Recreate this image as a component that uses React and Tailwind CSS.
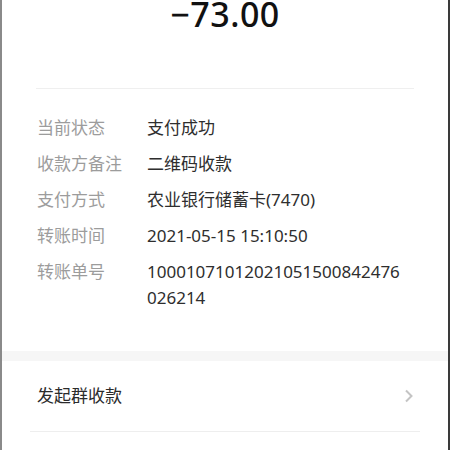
export default function App() {
  const rows = [
    ["当前状态", ["支付成功"]],
    ["收款方备注", ["二维码收款"]],
    ["支付方式", ["农业银行储蓄卡(7470)"]],
    ["转账时间", ["2021-05-15 15:10:50"]],
    ["转账单号", ["10001071012021051500842476", "026214"]],
  ];
  return (
    <div
      className="w-[450px] h-[450px] bg-white overflow-hidden border-l-2 border-l-[#8a8a8a] border-r-2 border-r-[#3a3a3a] flex flex-col"
      style={{ fontFamily: '"Noto Sans", "Noto Sans CJK SC", sans-serif' }}
    >
      <div className="h-[88px] flex justify-center">
        <div className="text-[34px] leading-[28px] h-[30px] font-medium text-[#111] tracking-[0.5px]">
          −73.00
        </div>
      </div>
      <div className="mx-[34px] h-px bg-[#efefef]" />
      <div className="flex flex-col gap-[10px] pt-[26px] pb-[40px] pl-[35px]">
        {rows.map(([label, vals]) => (
          <div key={label} className="flex text-[17px] leading-[26px]">
            <div className="w-[110px] text-[#9c9c9c]">{label}</div>
            <div className="text-[#2e2e2e]">
              {vals.map((v) => (
                <div key={v}>{v}</div>
              ))}
            </div>
          </div>
        ))}
      </div>
      <div className="h-[10px] bg-[#f6f6f6]" />
      <div className="flex items-center justify-between h-[70px] pl-[35px] pr-[34px]">
        <div className="text-[17px] text-[#2b2b2b]">发起群收款</div>
        <svg width="10" height="14" viewBox="0 0 10 14">
          <path d="M2 1.5 L7.5 7 L2 12.5" fill="none" stroke="#c4c4c4" strokeWidth="2" />
        </svg>
      </div>
      <div className="mx-[28px] h-px bg-[#eeeeee]" />
    </div>
  );
}
